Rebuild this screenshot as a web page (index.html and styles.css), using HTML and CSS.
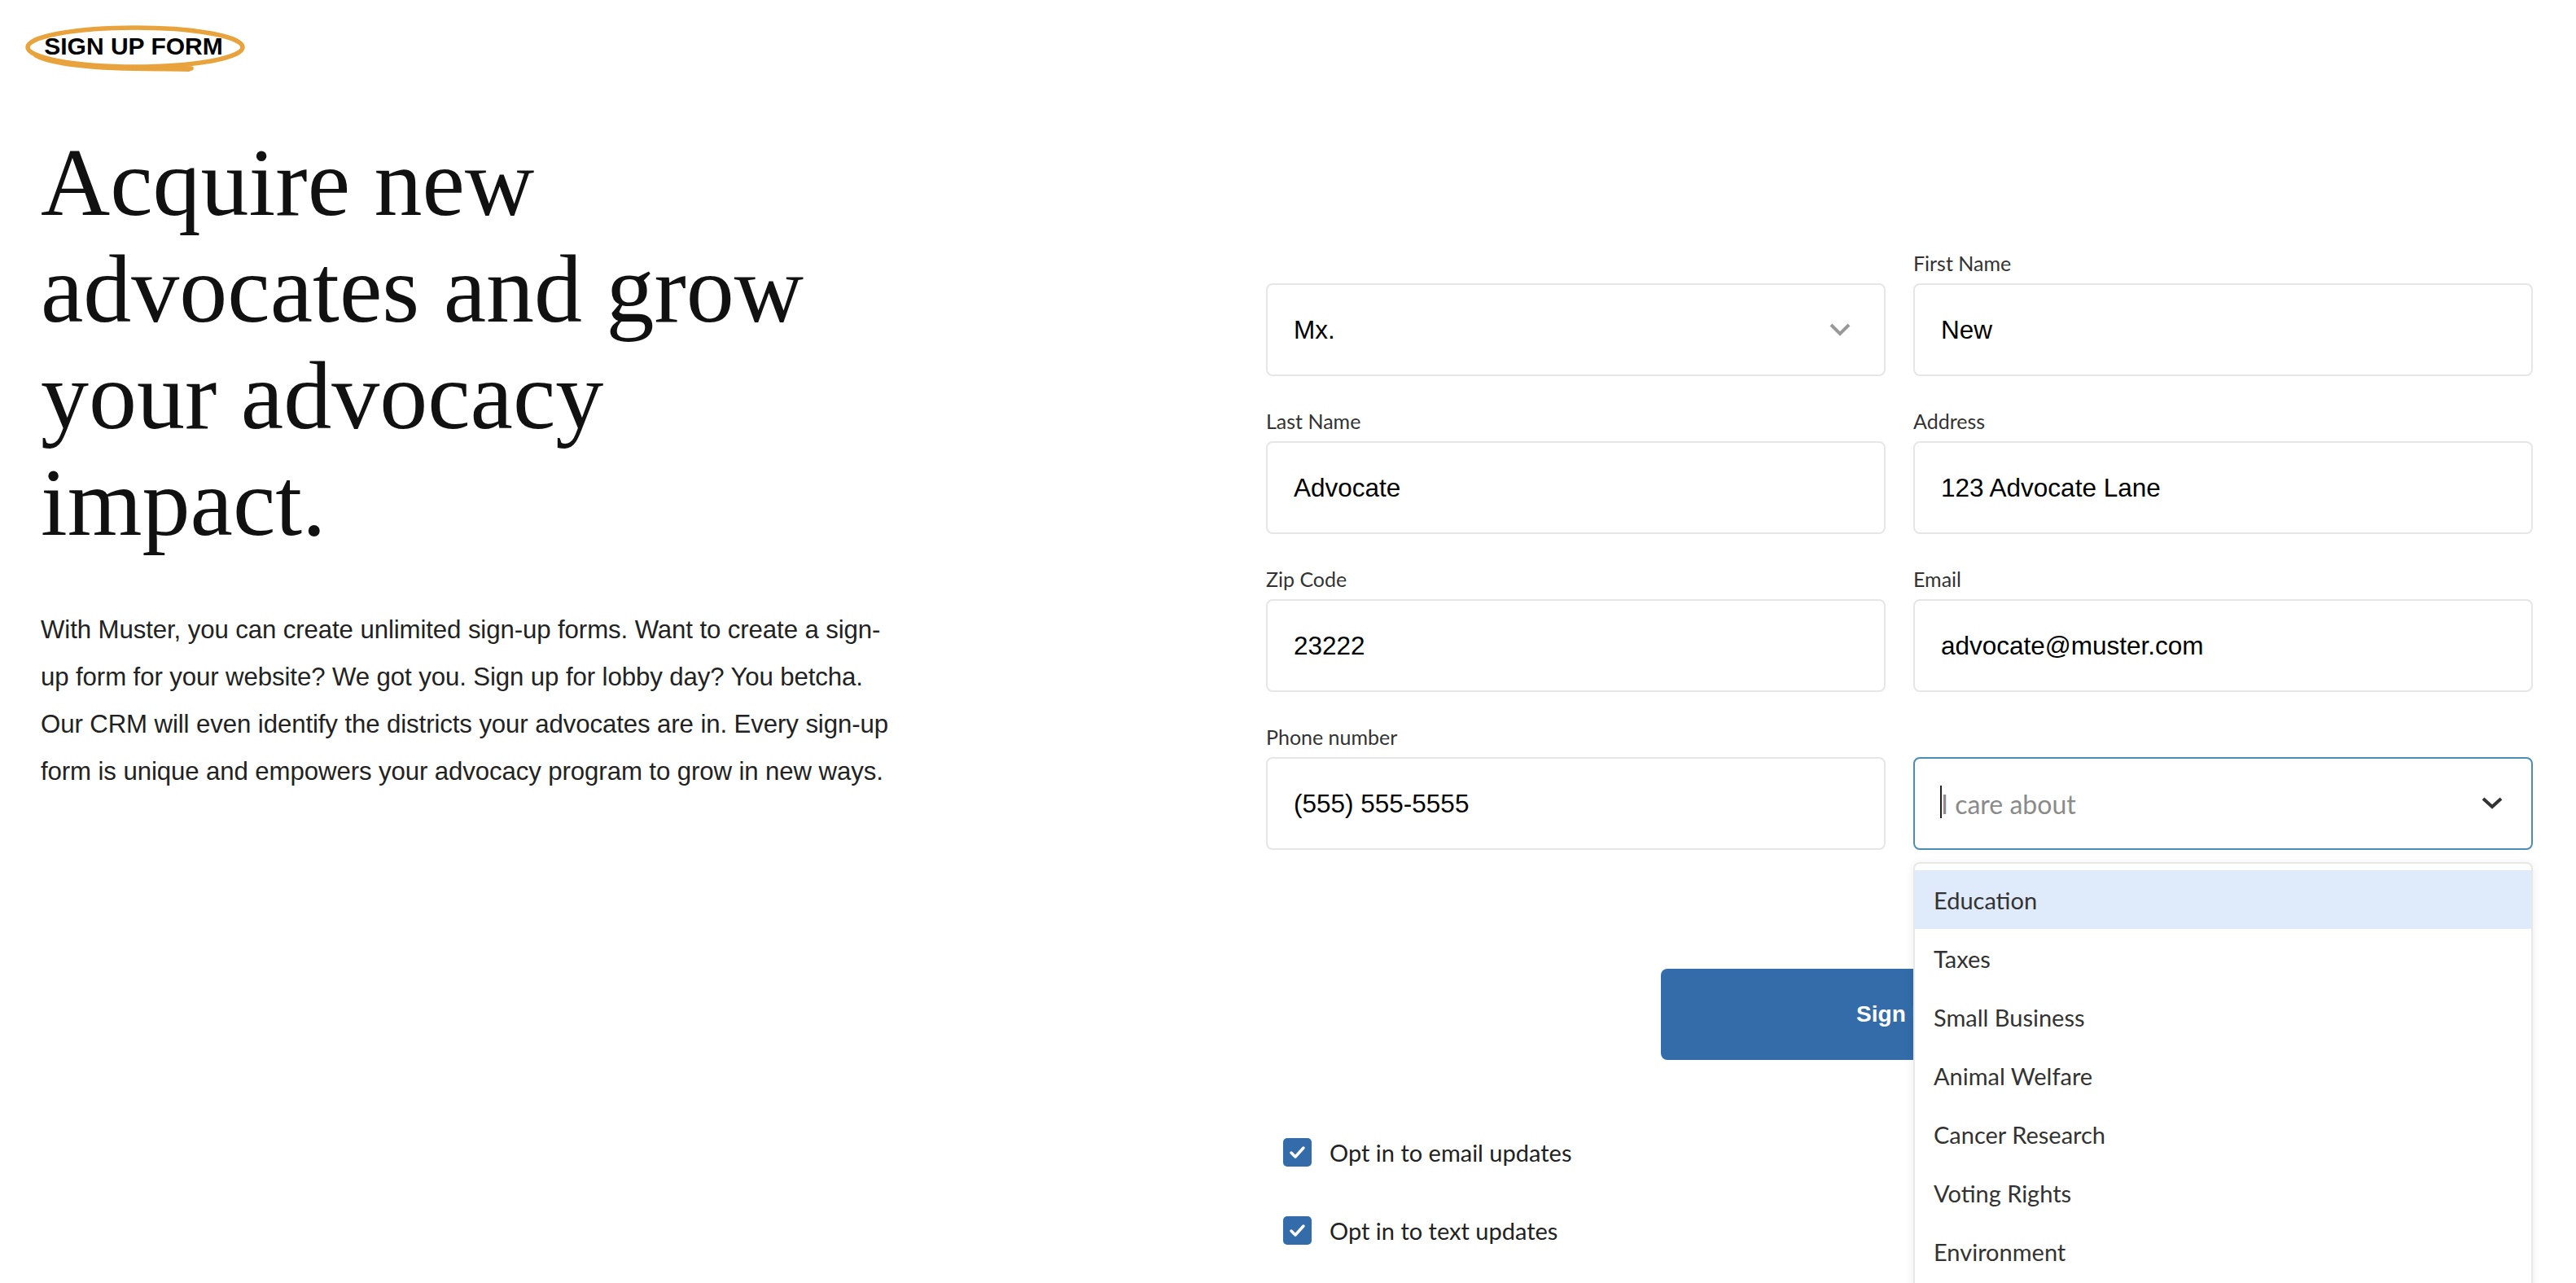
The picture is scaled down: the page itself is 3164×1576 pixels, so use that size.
FILE: index.html
```html
<!DOCTYPE html>
<html lang="en">
<head>
<meta charset="utf-8">
<title>Sign Up Form</title>
<link rel="stylesheet" href="styles.css">
</head>
<body>
<div class="page">
  <header class="top">
    <div class="logo">
      <svg class="logo-ring" viewBox="0 0 272 58" width="272" height="58" aria-hidden="true">
        <ellipse cx="136" cy="28" rx="132" ry="24" fill="none" stroke="#e9a33c" stroke-width="5.5"/>
        <path d="M14 38 C 40 52, 110 56, 205 54" fill="none" stroke="#e9a33c" stroke-width="5.5" stroke-linecap="round"/>
        <path d="M150 55 L 202 56" fill="none" stroke="#e9a33c" stroke-width="4" stroke-linecap="round"/>
      </svg>
      <span class="logo-text">SIGN UP FORM</span>
    </div>
  </header>
  <main class="main">
    <section class="intro">
      <h1 class="headline">Acquire new<br>advocates and grow<br>your advocacy<br>impact.</h1>
      <p class="lead">With Muster, you can create unlimited sign-up forms. Want to create a sign-<br>up form for your website? We got you. Sign up for lobby day? You betcha.<br>Our CRM will even identify the districts your advocates are in. Every sign-up<br>form is unique and empowers your advocacy program to grow in new ways.</p>
    </section>
    <section class="signup">
      <form class="form">
        <div class="grid">
          <div class="field">
            <div class="control select select-title">
              <span>Mx.</span>
              <svg class="chev" viewBox="0 0 26 16" width="26" height="16" aria-hidden="true"><polyline points="2,2 13,13 24,2" fill="none" stroke="#999" stroke-width="4"/></svg>
            </div>
          </div>
          <div class="field">
            <label class="label">First Name</label>
            <input class="control" type="text" value="New">
          </div>
          <div class="field">
            <label class="label">Last Name</label>
            <input class="control" type="text" value="Advocate">
          </div>
          <div class="field">
            <label class="label">Address</label>
            <input class="control" type="text" value="123 Advocate Lane">
          </div>
          <div class="field">
            <label class="label">Zip Code</label>
            <input class="control" type="text" value="23222">
          </div>
          <div class="field">
            <label class="label">Email</label>
            <input class="control" type="text" value="advocate@muster.com">
          </div>
          <div class="field">
            <label class="label">Phone number</label>
            <input class="control" type="text" value="(555) 555-5555">
          </div>
          <div class="field field-issues">
            <div class="control select select-issues">
              <span class="placeholder"><span class="caret"></span>I care about</span>
              <svg class="chev" viewBox="0 0 26 16" width="26" height="16" aria-hidden="true"><polyline points="2,2 13,12 24,2" fill="none" stroke="#333" stroke-width="4"/></svg>
            </div>
            <ul class="menu">
              <li class="option active">Education</li>
              <li class="option">Taxes</li>
              <li class="option">Small Business</li>
              <li class="option">Animal Welfare</li>
              <li class="option">Cancer Research</li>
              <li class="option">Voting Rights</li>
              <li class="option">Environment</li>
            </ul>
          </div>
        </div>
        <div class="actions">
          <button class="submit" type="button">Sign Up</button>
        </div>
        <div class="optins">
          <div class="optin">
            <span class="check"><svg viewBox="0 0 35 35" width="35" height="35" aria-hidden="true"><polyline points="10,18 15,23 25,12" fill="none" stroke="#fff" stroke-width="3.5" stroke-linecap="round" stroke-linejoin="round"/></svg></span>
            <span class="optin-label">Opt in to email updates</span>
          </div>
          <div class="optin">
            <span class="check"><svg viewBox="0 0 35 35" width="35" height="35" aria-hidden="true"><polyline points="10,18 15,23 25,12" fill="none" stroke="#fff" stroke-width="3.5" stroke-linecap="round" stroke-linejoin="round"/></svg></span>
            <span class="optin-label">Opt in to text updates</span>
          </div>
        </div>
      </form>
    </section>
  </main>
</div>
</body>
</html>
```

FILE: styles.css
```css
* { box-sizing: border-box; }

html, body {
  margin: 0;
  height: 100%;
  overflow: hidden;
  background: #ffffff;
}

body {
  font-family: "Liberation Sans", Arial, sans-serif;
  color: #111;
}

.page {
  width: 3164px;
  height: 1576px;
  overflow: hidden;
}

/* ---------- header / logo ---------- */
.top {
  height: 90px;
  padding: 30px 0 0 30px;
}

.logo {
  position: relative;
  width: 272px;
  height: 58px;
  display: flex;
  align-items: center;
  justify-content: center;
}

.logo-ring {
  position: absolute;
  left: 0;
  top: 0;
}

.logo-text {
  position: relative;
  font-family: "Liberation Sans", Arial, sans-serif;
  font-weight: 700;
  font-size: 30px;
  letter-spacing: 0;
  color: #000;
  margin-top: -5px;
  margin-left: -4px;
}

/* ---------- main layout ---------- */
.main {
  display: flex;
  align-items: flex-start;
  padding: 0 53px 0 50px;
}

.intro {
  width: 1150px;
  padding-top: 69px;
}

.headline {
  margin: 0;
  font-family: "Liberation Serif", "Times New Roman", serif;
  font-weight: 400;
  font-size: 118px;
  line-height: 131px;
  color: #111;
  white-space: nowrap;
}

.lead {
  margin: 62px 0 0;
  font-family: "Liberation Sans", Arial, sans-serif;
  font-size: 31.2px;
  line-height: 58px;
  letter-spacing: -0.1px;
  color: #222;
  white-space: nowrap;
}

.signup {
  width: 1556px;
  margin-left: auto;
  padding-top: 218px;
}

/* ---------- form grid ---------- */
.grid {
  display: grid;
  grid-template-columns: 1fr 1fr;
  column-gap: 34px;
  row-gap: 40px;
  align-items: end;
}

.field {
  display: flex;
  flex-direction: column;
}

.label {
  display: block;
  height: 30px;
  margin-bottom: 10px;
  font-family: Lato, "Open Sans", sans-serif;
  font-size: 25px;
  line-height: 30px;
  color: #333;
}

.control {
  width: 100%;
  height: 114px;
  margin: 0;
  padding: 0 32px;
  border: 2px solid #e6e6e6;
  border-radius: 8px;
  background: #fff;
  font-family: "Liberation Sans", Arial, sans-serif;
  font-size: 31.5px;
  color: #000;
  outline: none;
}

.select {
  display: flex;
  align-items: center;
  justify-content: space-between;
}

.select-title {
  padding-right: 41px;
}

.select-issues {
  padding-right: 35px;
  border-color: #4c8db2;
}

.chev { display: block; }

.placeholder {
  position: relative;
  font-family: Lato, "Open Sans", sans-serif;
  font-size: 32px;
  color: #8a8a8a;
}

.caret {
  position: absolute;
  left: -1px;
  top: -3px;
  width: 2px;
  height: 40px;
  background: #222;
}

/* ---------- dropdown menu ---------- */
.field-issues {
  position: relative;
}

.menu {
  position: absolute;
  left: 0;
  right: 0;
  top: calc(100% + 15px);
  height: 560px;
  margin: 0;
  padding: 8px 0 0;
  list-style: none;
  background: #fff;
  border: 2px solid #e8e8e8;
  border-bottom: none;
  border-radius: 8px 8px 0 0;
  box-shadow: 0 2px 12px rgba(0, 0, 0, 0.08);
  overflow: hidden;
  z-index: 2;
}

.option {
  height: 72px;
  display: flex;
  align-items: center;
  padding-left: 23px;
  font-family: Lato, "Open Sans", sans-serif;
  font-size: 29px;
  color: #333;
}

.option.active {
  background: #dfeafb;
}

/* ---------- submit ---------- */
.actions {
  margin-top: 146px;
  display: flex;
  justify-content: center;
}

.submit {
  width: 586px;
  height: 112px;
  border: none;
  border-radius: 8px;
  background: #336ca8;
  color: #fff;
  font-family: "Liberation Sans", Arial, sans-serif;
  font-weight: 700;
  font-size: 28px;
}

/* ---------- opt-ins ---------- */
.optins {
  margin-top: 96px;
  padding-left: 21px;
  display: flex;
  flex-direction: column;
  gap: 61px;
}

.optin {
  display: flex;
  align-items: center;
  height: 35px;
}

.check {
  width: 35px;
  height: 35px;
  border-radius: 5px;
  background: #336ca8;
  display: block;
}

.check svg { display: block; }

.optin-label {
  margin-left: 22px;
  font-family: Lato, "Open Sans", sans-serif;
  font-size: 29px;
  color: #222;
}
```
